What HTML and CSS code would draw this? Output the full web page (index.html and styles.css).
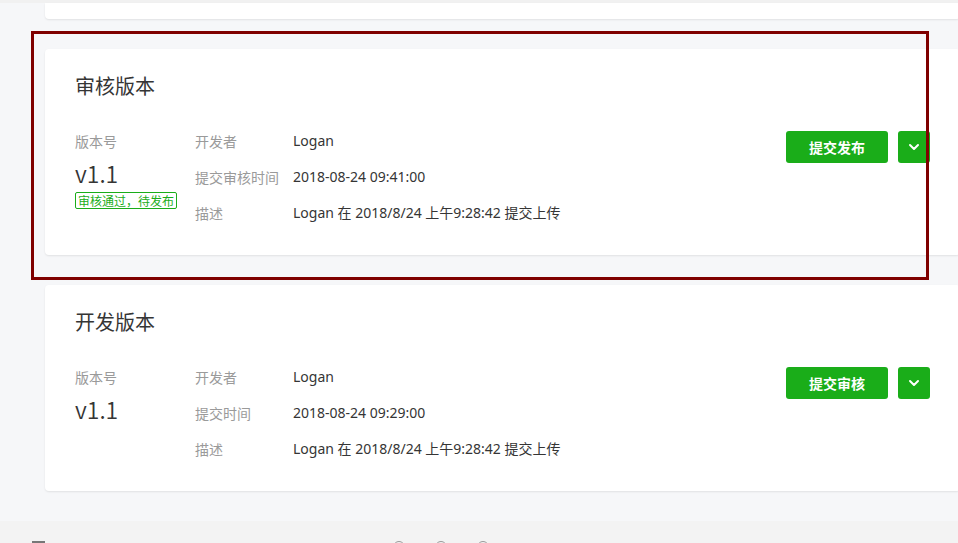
FILE: index.html
```html
<!DOCTYPE html>
<html lang="zh-CN">
<head>
<meta charset="utf-8">
<title>版本管理</title>
<link rel="stylesheet" href="styles.css">
</head>
<body>
<div class="topstrip"></div>
<main class="cards">
  <div class="card card-prev"></div>

  <section class="card">
    <h2 class="card-title">审核版本</h2>
    <div class="card-body">
      <div class="ver-col">
        <div class="ver-label">版本号</div>
        <div class="ver-num">v1.1</div>
        <span class="tag">审核通过，待发布</span>
      </div>
      <dl class="info">
        <div class="info-row"><dt>开发者</dt><dd>Logan</dd></div>
        <div class="info-row"><dt>提交审核时间</dt><dd>2018-08-24 09:41:00</dd></div>
        <div class="info-row"><dt>描述</dt><dd>Logan 在 2018/8/24 上午9:28:42 提交上传</dd></div>
      </dl>
      <div class="actions">
        <button class="btn-primary">提交发布</button>
        <button class="btn-drop" aria-label="更多">
          <svg width="12" height="8" viewBox="0 0 12 8"><path d="M2 2 L6 6 L10 2" fill="none" stroke="#fff" stroke-width="2" stroke-linecap="round" stroke-linejoin="round"/></svg>
        </button>
      </div>
    </div>
  </section>

  <section class="card">
    <h2 class="card-title">开发版本</h2>
    <div class="card-body">
      <div class="ver-col">
        <div class="ver-label">版本号</div>
        <div class="ver-num">v1.1</div>
      </div>
      <dl class="info">
        <div class="info-row"><dt>开发者</dt><dd>Logan</dd></div>
        <div class="info-row"><dt>提交时间</dt><dd>2018-08-24 09:29:00</dd></div>
        <div class="info-row"><dt>描述</dt><dd>Logan 在 2018/8/24 上午9:28:42 提交上传</dd></div>
      </dl>
      <div class="actions">
        <button class="btn-primary">提交审核</button>
        <button class="btn-drop" aria-label="更多">
          <svg width="12" height="8" viewBox="0 0 12 8"><path d="M2 2 L6 6 L10 2" fill="none" stroke="#fff" stroke-width="2" stroke-linecap="round" stroke-linejoin="round"/></svg>
        </button>
      </div>
    </div>
  </section>
</main>
<footer class="footer">
  <span class="f-square"></span>
  <div class="f-icons">
    <span class="f-circle"></span>
    <span class="f-circle"></span>
    <span class="f-circle"></span>
    <span class="f-mark m1"></span>
    <span class="f-mark m2"></span>
  </div>
</footer>
<div class="highlight"></div>
</body>
</html>
```

FILE: styles.css
```css
* { box-sizing: border-box; }
html, body { margin: 0; padding: 0; }
body {
  width: 958px;
  height: 543px;
  overflow: hidden;
  background: #f6f7f9;
  font-family: "Noto Sans CJK SC", "Noto Sans", sans-serif;
  color: #353535;
  position: relative;
}
.topstrip {
  height: 3px;
  background: #f1f1f1;
}
.cards {
  margin-left: 45px;
  width: 915px;
  display: flex;
  flex-direction: column;
  gap: 30px;
  padding-bottom: 30px;
}
.card {
  background: #fff;
  border-radius: 4px;
  box-shadow: 0 1px 2px rgba(0, 0, 0, 0.09);
  padding: 23px 30px 24px 30px;
}
.card-prev {
  height: 16px;
  padding: 0;
  border-radius: 0 0 4px 4px;
}
.card-title {
  margin: 0;
  font-size: 20px;
  font-weight: 400;
  line-height: 28px;
  color: #353535;
}
.card-body {
  display: flex;
  align-items: flex-start;
  margin-top: 23px;
}
.ver-col {
  width: 120px;
  display: flex;
  flex-direction: column;
  align-items: flex-start;
}
.ver-label {
  font-size: 14px;
  line-height: 36px;
  color: #9a9a9a;
}
.ver-num {
  font-size: 23px;
  line-height: 30px;
  margin-top: -1px;
  font-weight: 350;
  color: #353535;
}
.tag {
  margin-top: 4px;
  font-size: 12px;
  line-height: 15px;
  color: #1aad19;
  border: 1px solid #1aad19;
  border-radius: 2px;
  padding: 0 2px;
}
.info {
  margin: 0;
  flex: 1;
}
.info-row {
  display: flex;
  font-size: 14px;
  line-height: 36px;
}
.info-row dt {
  width: 98px;
  color: #9a9a9a;
}
.info-row dd {
  margin: 0;
  color: #353535;
  font-family: "Noto Sans", "Noto Sans CJK SC", sans-serif;
}
.actions {
  display: flex;
  gap: 10px;
  margin-top: 8px;
}
.btn-primary {
  width: 102px;
  height: 32px;
  border: 0;
  border-radius: 3px;
  background: #1aad19;
  color: #fff;
  font-family: inherit;
  font-size: 14px;
  font-weight: 700;
  padding: 0;
}
.btn-drop {
  width: 32px;
  height: 32px;
  border: 0;
  border-radius: 3px;
  background: #1aad19;
  display: flex;
  align-items: center;
  justify-content: center;
  padding: 0;
}
.footer {
  height: 40px;
  background: #f3f3f3;
  display: flex;
  align-items: flex-start;
  padding: 20px 0 0 32px;
}
.f-square {
  width: 13px;
  height: 12px;
  border: 2px solid #777;
  border-bottom: 0;
}
.f-icons {
  display: flex;
  align-items: flex-start;
  margin-left: 348px;
  gap: 30px;
}
.f-circle {
  width: 12px;
  height: 12px;
  border: 1px solid #999;
  border-radius: 50%;
}
.f-mark {
  width: 2px;
  height: 6px;
  background: #999;
  margin-top: 2px;
}
.m2 { margin-left: 3px; }
.highlight {
  position: absolute;
  left: 31px;
  top: 31px;
  width: 898px;
  height: 249px;
  border: 3px solid #7f0000;
  pointer-events: none;
}
```
